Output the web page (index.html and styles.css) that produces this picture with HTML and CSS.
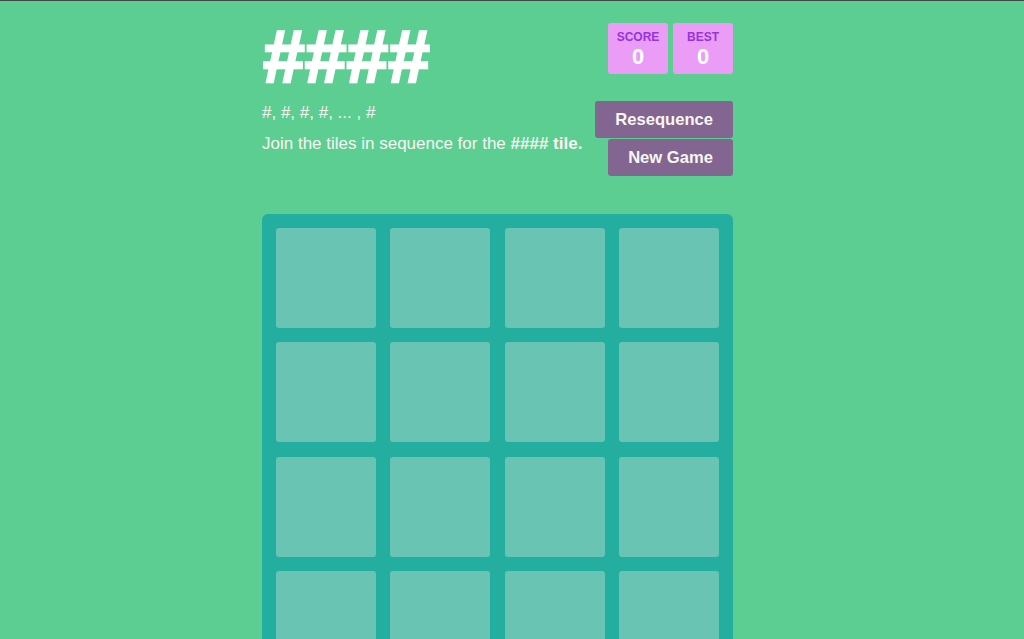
FILE: index.html
```html
<!DOCTYPE html>
<html>
<head>
<meta charset="utf-8">
<link rel="stylesheet" href="styles.css">
</head>
<body>
<div class="container">
  <div class="heading">
    <h1 class="title">####</h1>
    <div class="scores">
      <div class="score-box"><div class="score-label">SCORE</div><div class="score-value">0</div></div>
      <div class="score-box"><div class="score-label">BEST</div><div class="score-value">0</div></div>
    </div>
  </div>
  <div class="intro-row">
    <div class="texts">
      <p class="subtitle">#, #, #, #, ... , #</p>
      <p class="intro">Join the tiles in sequence for the <strong>#### tile.</strong></p>
    </div>
    <div class="buttons">
      <a class="btn">Resequence</a>
      <a class="btn">New Game</a>
    </div>
  </div>
  <div class="board">
    <div class="cell"></div><div class="cell"></div><div class="cell"></div><div class="cell"></div>
    <div class="cell"></div><div class="cell"></div><div class="cell"></div><div class="cell"></div>
    <div class="cell"></div><div class="cell"></div><div class="cell"></div><div class="cell"></div>
    <div class="cell"></div><div class="cell"></div><div class="cell"></div><div class="cell"></div>
  </div>
</div>
</body>
</html>
```

FILE: styles.css
```css
html, body {
  margin: 0;
  padding: 0;
}
body {
  background: #5dce91;
  border-top: 1px solid #41484a;
  font-family: "Liberation Sans", Arial, sans-serif;
  color: #f9f6f2;
  overflow: hidden;
  height: 638px;
}
.container {
  width: 471px;
  margin-left: calc(50% - 250px);
}
.heading {
  display: flex;
  justify-content: space-between;
  align-items: flex-start;
}
.title {
  margin: 17px 0 0 0;
  font-size: 75px;
  line-height: 76px;
  font-weight: bold;
  color: #ffffff;
  -webkit-text-stroke: 2.5px #ffffff;
  padding-left: 1px;
}
.scores {
  display: flex;
  gap: 5px;
  margin-top: 22px;
}
.score-box {
  width: 60px;
  height: 51px;
  box-sizing: border-box;
  background: #eb9cf6;
  border-radius: 3px;
  text-align: center;
  padding-top: 8px;
}
.score-label {
  font-size: 12px;
  line-height: 13px;
  font-weight: bold;
  color: #9634e0;
}
.score-value {
  font-size: 22px;
  line-height: 25px;
  font-weight: bold;
  color: #ffffff;
}
.intro-row {
  display: flex;
  justify-content: space-between;
  align-items: flex-start;
  margin-top: 7px;
}
.texts {
  padding-top: 2px;
}
.subtitle {
  margin: 0;
  font-size: 17px;
  line-height: 20px;
}
.intro {
  margin: 11px 0 0 0;
  font-size: 17px;
  line-height: 20px;
}
.buttons {
  display: flex;
  flex-direction: column;
  align-items: flex-end;
  gap: 1px;
}
.btn {
  display: block;
  background: #826591;
  color: #f9f6f2;
  border-radius: 3px;
  font-size: 16.6px;
  font-weight: bold;
  height: 37px;
  line-height: 37px;
  padding: 0 20px;
}
.board {
  margin-top: 38px;
  width: 471px;
  box-sizing: border-box;
  padding: 14px;
  background: #23ae9f;
  border-radius: 6px;
  display: grid;
  grid-template-columns: repeat(4, 1fr);
  grid-auto-rows: 100px;
  gap: 14.33px;
}
.cell {
  background: #69c4b4;
  border-radius: 3px;
}
```
